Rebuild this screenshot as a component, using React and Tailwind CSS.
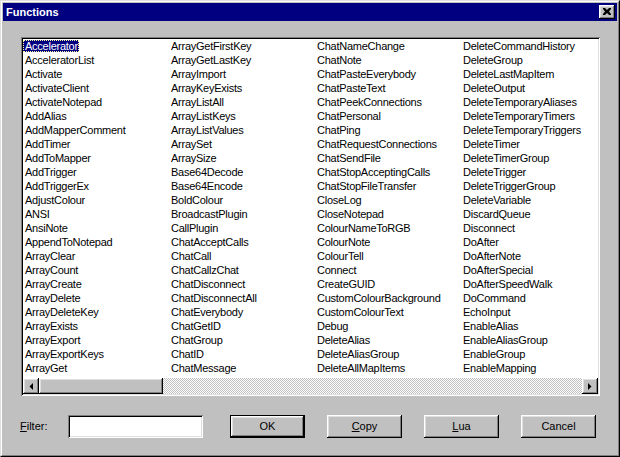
const raised =
  "shadow-[inset_-1px_-1px_#000,inset_1px_1px_#fff,inset_-2px_-2px_#808080,inset_2px_2px_#dfdfdf]";
const sunken =
  "shadow-[inset_1px_1px_#808080,inset_-1px_-1px_#fff,inset_2px_2px_#000,inset_-2px_-2px_#dfdfdf]";

const columns = [
  [
    "Accelerator", "AcceleratorList", "Activate", "ActivateClient", "ActivateNotepad", "AddAlias",
    "AddMapperComment", "AddTimer", "AddToMapper", "AddTrigger", "AddTriggerEx", "AdjustColour",
    "ANSI", "AnsiNote", "AppendToNotepad", "ArrayClear", "ArrayCount", "ArrayCreate",
    "ArrayDelete", "ArrayDeleteKey", "ArrayExists", "ArrayExport", "ArrayExportKeys", "ArrayGet",
  ],
  [
    "ArrayGetFirstKey", "ArrayGetLastKey", "ArrayImport", "ArrayKeyExists", "ArrayListAll",
    "ArrayListKeys", "ArrayListValues", "ArraySet", "ArraySize", "Base64Decode", "Base64Encode",
    "BoldColour", "BroadcastPlugin", "CallPlugin", "ChatAcceptCalls", "ChatCall", "ChatCallzChat",
    "ChatDisconnect", "ChatDisconnectAll", "ChatEverybody", "ChatGetID", "ChatGroup", "ChatID",
    "ChatMessage",
  ],
  [
    "ChatNameChange", "ChatNote", "ChatPasteEverybody", "ChatPasteText", "ChatPeekConnections",
    "ChatPersonal", "ChatPing", "ChatRequestConnections", "ChatSendFile", "ChatStopAcceptingCalls",
    "ChatStopFileTransfer", "CloseLog", "CloseNotepad", "ColourNameToRGB", "ColourNote",
    "ColourTell", "Connect", "CreateGUID", "CustomColourBackground", "CustomColourText", "Debug",
    "DeleteAlias", "DeleteAliasGroup", "DeleteAllMapItems",
  ],
  [
    "DeleteCommandHistory", "DeleteGroup", "DeleteLastMapItem", "DeleteOutput",
    "DeleteTemporaryAliases", "DeleteTemporaryTimers", "DeleteTemporaryTriggers", "DeleteTimer",
    "DeleteTimerGroup", "DeleteTrigger", "DeleteTriggerGroup", "DeleteVariable", "DiscardQueue",
    "Disconnect", "DoAfter", "DoAfterNote", "DoAfterSpecial", "DoAfterSpeedWalk", "DoCommand",
    "EchoInput", "EnableAlias", "EnableAliasGroup", "EnableGroup", "EnableMapping",
  ],
];

function Arrow({ dir }) {
  return (
    <svg width="4" height="7" viewBox="0 0 4 7" className="block">
      {dir === "left" ? (
        <polygon points="4,0 4,7 0.5,3.5" fill="#000" />
      ) : (
        <polygon points="0,0 0,7 3.5,3.5" fill="#000" />
      )}
    </svg>
  );
}

function Button({ children, isDefault }) {
  if (isDefault) {
    return (
      <div className="w-[75px] h-[23px] border border-black">
        <div className={`w-full h-full flex items-center justify-center bg-[#c0c0c0] ${raised}`}>
          {children}
        </div>
      </div>
    );
  }
  return (
    <div className={`w-[75px] h-[23px] flex items-center justify-center bg-[#c0c0c0] ${raised}`}>
      {children}
    </div>
  );
}

export default function App() {
  return (
    <div className="w-[620px] h-[457px] font-['Liberation_Sans',Arial,sans-serif] text-[11px] text-black bg-[#c0c0c0] border border-t-[#dfdfdf] border-l-[#dfdfdf] border-b-black border-r-black">
      <div className="h-full border border-t-white border-l-white border-b-[#808080] border-r-[#808080] p-px flex flex-col">
        {/* title bar */}
        <div className="h-[18px] bg-[#000080] flex items-center justify-between pl-[3px] pr-[2px] shrink-0">
          <span className="text-white font-bold text-[11px] leading-none">Functions</span>
          <div className={`w-[16px] h-[14px] bg-[#c0c0c0] flex items-center justify-center ${raised}`}>
            <svg width="8" height="7" viewBox="0 0 8 7" className="block -mt-px">
              <path d="M0 0h2l2 2 2-2h2v1L6 3.5 8 6v1H6L4 5 2 7H0V6l2-2.5L0 1z" fill="#000" />
            </svg>
          </div>
        </div>

        {/* list box */}
        <div className={`mt-[16px] ml-[18px] w-[579px] h-[359px] bg-white p-[2px] flex flex-col ${sunken}`}>
          <div className="h-[339px] flex overflow-hidden tracking-[-0.25px]">
            {columns.map((col, ci) => (
              <div key={ci} className="w-[146px] shrink-0 flex flex-col">
                {col.map((name, i) => (
                  <div key={name} className="h-[14px] leading-[14px] whitespace-nowrap">
                    {ci === 0 && i === 0 ? (
                      <span className="inline-block bg-[#000080] text-white pl-[2px] pr-px leading-[12px] outline-1 outline-dotted outline-[#ffffa0] -outline-offset-1 mt-px">
                        {name}
                      </span>
                    ) : (
                      <span className="pl-[2px]">{name}</span>
                    )}
                  </div>
                ))}
              </div>
            ))}
          </div>
          {/* horizontal scrollbar */}
          <div className="h-[16px] flex">
            <div className={`w-[16px] h-full bg-[#c0c0c0] flex items-center justify-center ${raised}`}>
              <Arrow dir="left" />
            </div>
            <div className={`w-[124px] h-full bg-[#c0c0c0] ${raised}`} />
            <div className="flex-1 h-full bg-[image:repeating-conic-gradient(#c0c0c0_0%_25%,#fff_0%_50%)] bg-[length:2px_2px]" />
            <div className={`w-[16px] h-full bg-[#c0c0c0] flex items-center justify-center ${raised}`}>
              <Arrow dir="right" />
            </div>
          </div>
        </div>

        {/* bottom row */}
        <div className="mt-[19px] ml-[17px] flex items-center">
          <div className="w-[48px]">
            <span className="underline underline-offset-[1px]">F</span>ilter:
          </div>
          <div className={`w-[135px] h-[23px] bg-white ${sunken}`} />
          <div className="ml-[27px] flex gap-[22px]">
            <Button isDefault>OK</Button>
            <Button>
              <span className="underline underline-offset-[1px]">C</span>opy
            </Button>
            <Button>
              <span className="underline underline-offset-[1px]">L</span>ua
            </Button>
            <Button>Cancel</Button>
          </div>
        </div>
      </div>
    </div>
  );
}
